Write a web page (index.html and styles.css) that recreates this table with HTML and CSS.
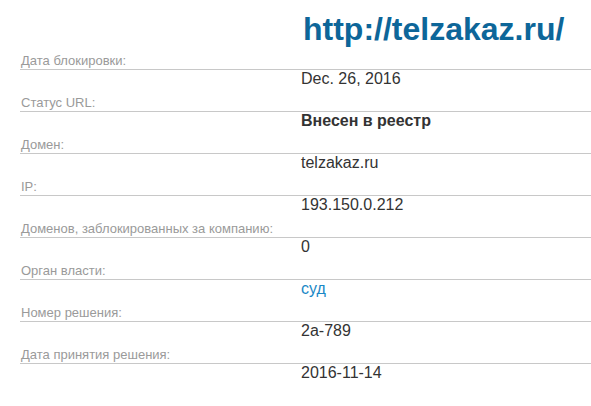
FILE: index.html
```html
<!DOCTYPE html>
<html lang="ru">
<head>
<meta charset="utf-8">
<title>telzakaz.ru</title>
<link rel="stylesheet" href="styles.css">
</head>
<body>
<div class="page">
  <h1 class="title">http://telzakaz.ru/</h1>
  <dl class="info">
    <dt class="label">Дата блокировки:</dt>
    <dd class="value">Dec. 26, 2016</dd>
    <dt class="label">Статус URL:</dt>
    <dd class="value value-strong">Внесен в реестр</dd>
    <dt class="label">Домен:</dt>
    <dd class="value">telzakaz.ru</dd>
    <dt class="label">IP:</dt>
    <dd class="value">193.150.0.212</dd>
    <dt class="label">Доменов, заблокированных за компанию:</dt>
    <dd class="value">0</dd>
    <dt class="label">Орган власти:</dt>
    <dd class="value"><a class="link" href="#">суд</a></dd>
    <dt class="label">Номер решения:</dt>
    <dd class="value">2a-789</dd>
    <dt class="label">Дата принятия решения:</dt>
    <dd class="value">2016-11-14</dd>
  </dl>
</div>
</body>
</html>
```

FILE: styles.css
```css
html, body {
  margin: 0;
  padding: 0;
  background: #ffffff;
}

body {
  font-family: "Liberation Sans", Arial, sans-serif;
  color: #333333;
}

.page {
  padding: 11px 0 0 20px;
}

.title {
  margin: 0 0 6px 283px;
  font-size: 32px;
  line-height: 36px;
  font-weight: bold;
  color: #0d6699;
}

.info {
  margin: 0;
  padding: 0;
}

.label {
  margin: 0;
  padding-left: 1px;
  font-size: 13px;
  line-height: 16px;
  color: #9a9a9a;
  border-bottom: 1px solid #c8c8c8;
}

.value {
  margin: 0 0 7px 281px;
  font-size: 16px;
  line-height: 18px;
  color: #333333;
}

.value-strong {
  font-weight: bold;
}

.link {
  color: #1a88c6;
  text-decoration: none;
}
```
